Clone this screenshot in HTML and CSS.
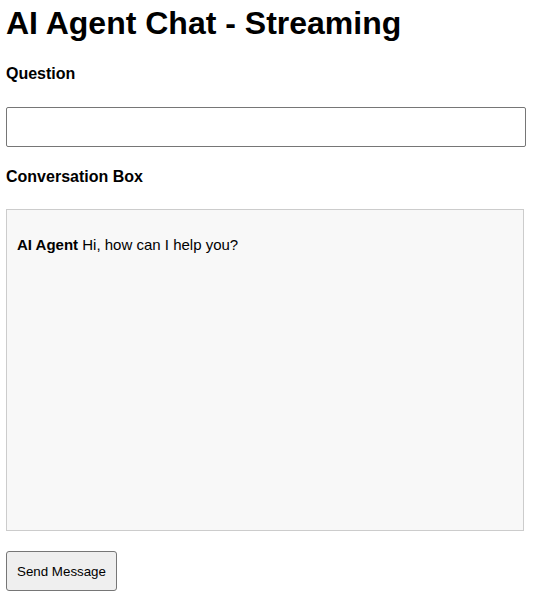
FILE: index.html
```html
<!DOCTYPE html>
<html>
<head>
<meta charset="utf-8">
<link rel="stylesheet" href="styles.css">
</head>
<body>
<div class="page">
  <h1 class="title">AI Agent Chat - Streaming</h1>
  <label class="label label-question" for="q">Question</label>
  <input class="question" id="q" type="text">
  <div class="label label-conv">Conversation Box</div>
  <div class="conv">
    <p class="msg"><strong>AI Agent</strong> Hi, how can I help you?</p>
  </div>
  <button class="send" type="button">Send Message</button>
</div>
</body>
</html>
```

FILE: styles.css
```css
html, body {
  margin: 0;
  padding: 0;
  background: #ffffff;
}
body {
  font-family: "Liberation Sans", Arial, sans-serif;
  color: #000;
}
.page {
  padding: 5px 6px 4px 6px;
  display: flex;
  flex-direction: column;
  align-items: flex-start;
}
.title {
  margin: 0;
  font-size: 32px;
  font-weight: bold;
  line-height: 36.8px;
}
.label {
  display: block;
  font-size: 16px;
  font-weight: bold;
  line-height: 18.4px;
}
.label-question {
  margin-top: 23.5px;
}
.question {
  margin: 23px 0 0 0;
  width: 520px;
  height: 40px;
  box-sizing: border-box;
  border: 1px solid #767676;
  border-radius: 2px;
  padding: 4px 8px;
  font-family: "Liberation Sans", Arial, sans-serif;
  font-size: 16px;
  background: #fff;
}
.label-conv {
  margin-top: 21px;
}
.conv {
  margin-top: 23px;
  width: 518px;
  height: 322px;
  box-sizing: border-box;
  border: 1px solid #cccccc;
  background: #f8f8f8;
  padding: 10px;
}
.msg {
  margin: 16px 0;
  font-size: 15px;
  line-height: 18.4px;
}
.send {
  margin-top: 20px;
  width: 111px;
  height: 40px;
  box-sizing: border-box;
  border: 1px solid #767676;
  border-radius: 3px;
  background: #efefef;
  font-family: "Liberation Sans", Arial, sans-serif;
  font-size: 13.33px;
  color: #000;
  padding: 0;
}
```
